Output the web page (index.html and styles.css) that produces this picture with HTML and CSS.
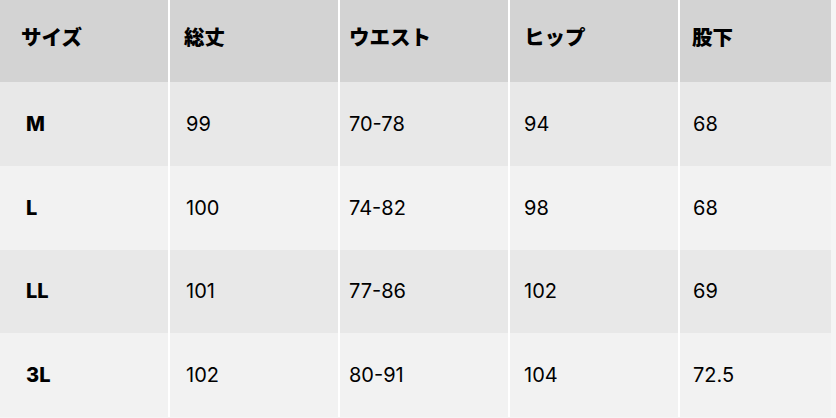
FILE: index.html
```html
<!DOCTYPE html>
<html lang="ja">
<head>
<meta charset="utf-8">
<link rel="stylesheet" href="styles.css">
</head>
<body>
<div class="table">
  <div class="row head">
    <div class="cell c1">サイズ</div>
    <div class="cell c2">総丈</div>
    <div class="cell c3">ウエスト</div>
    <div class="cell c4">ヒップ</div>
    <div class="cell c5">股下</div>
  </div>
  <div class="row odd">
    <div class="cell c1">M</div>
    <div class="cell c2">99</div>
    <div class="cell c3">70-78</div>
    <div class="cell c4">94</div>
    <div class="cell c5">68</div>
  </div>
  <div class="row even">
    <div class="cell c1">L</div>
    <div class="cell c2">100</div>
    <div class="cell c3">74-82</div>
    <div class="cell c4">98</div>
    <div class="cell c5">68</div>
  </div>
  <div class="row odd">
    <div class="cell c1">LL</div>
    <div class="cell c2">101</div>
    <div class="cell c3">77-86</div>
    <div class="cell c4">102</div>
    <div class="cell c5">69</div>
  </div>
  <div class="row even">
    <div class="cell c1">3L</div>
    <div class="cell c2">102</div>
    <div class="cell c3">80-91</div>
    <div class="cell c4">104</div>
    <div class="cell c5">72.5</div>
  </div>
</div>
</body>
</html>
```
FILE: styles.css
```css
html, body {
  margin: 0;
  padding: 0;
  background: #f5f5f5;
}
body {
  font-family: Inter, "Noto Sans CJK JP", sans-serif;
  color: #000;
  font-size: 20px;
}
.table {
  width: 831px;
  display: flex;
  flex-direction: column;
}
.row {
  display: grid;
  grid-template-columns: 168px 168px 168px 168px 151px;
  column-gap: 2px;
  background: #ffffff;
  height: 83.75px;
}
.row.head {
  height: 82px;
  font-weight: 800;
}
.cell {
  display: flex;
  align-items: center;
  line-height: 1;
}
.head .cell { background: #d3d3d3; }
.odd .cell { background: #e8e8e8; }
.even .cell { background: #f2f2f2; }

.cell.c1 { padding-left: 26px; font-weight: 800; }
.cell.c2 { padding-left: 16px; }
.cell.c3 { padding-left: 9px; }
.cell.c4 { padding-left: 14px; }
.cell.c5 { padding-left: 13px; }

.head .cell.c1 { padding-left: 21px; }
.head .cell.c2 { padding-left: 14px; }
.head .cell.c3 { padding-left: 9px; }
.head .cell.c4 { padding-left: 14px; }
.head .cell.c5 { padding-left: 12px; }
.head .cell { padding-bottom: 6px; font-size: 20.5px; }
```
